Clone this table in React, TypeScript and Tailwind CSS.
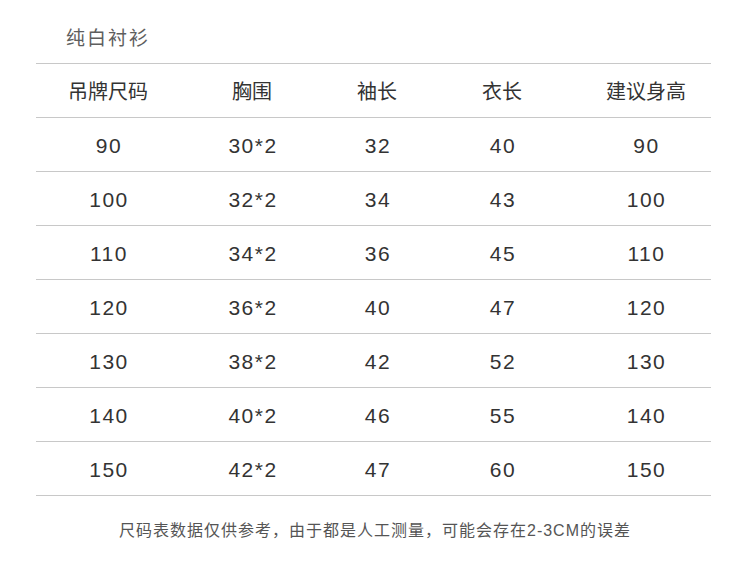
import React from "react";

const header = ["吊牌尺码", "胸围", "袖长", "衣长", "建议身高"];
const rows = [
  ["90", "30*2", "32", "40", "90"],
  ["100", "32*2", "34", "43", "100"],
  ["110", "34*2", "36", "45", "110"],
  ["120", "36*2", "40", "47", "120"],
  ["130", "38*2", "42", "52", "130"],
  ["140", "40*2", "46", "55", "140"],
  ["150", "42*2", "47", "60", "150"],
];

const font = { fontFamily: '"Liberation Sans", "Noto Sans CJK SC", sans-serif' };

function Row({ cells, head }: { cells: string[]; head?: boolean }) {
  return (
    <div
      className={
        "grid grid-cols-[144px_144px_106px_144px_1fr] h-[54px] items-center border-b border-[#c8c8c8] text-[#333] " +
        (head ? "text-[20px] pt-[3px]" : "text-[21px] tracking-[1.5px] pt-[2px] pl-[1px]")
      }
    >
      {cells.map((c, i) => (
        <div key={i} className={"text-center" + (i === 4 ? " pl-[7px]" : "")}>
          {c}
        </div>
      ))}
    </div>
  );
}

export default function App() {
  return (
    <div className="w-[750px] h-[570px] bg-white" style={font}>
      <div className="pl-[66px] pt-[27px] h-[64px] text-[19px] tracking-[2px] text-[#5e5e5e] leading-[24px]">纯白衬衫</div>
      <div className="mx-[36px] w-[675px] border-t border-[#c8c8c8] -mt-px">
        <Row cells={header} head />
        {rows.map((r, i) => (
          <Row key={i} cells={r} />
        ))}
      </div>
      <div className="text-center text-[16px] tracking-[1px] text-[#555] mt-[23px]">
        尺码表数据仅供参考，由于都是人工测量，可能会存在2-3CM的误差
      </div>
    </div>
  );
}
